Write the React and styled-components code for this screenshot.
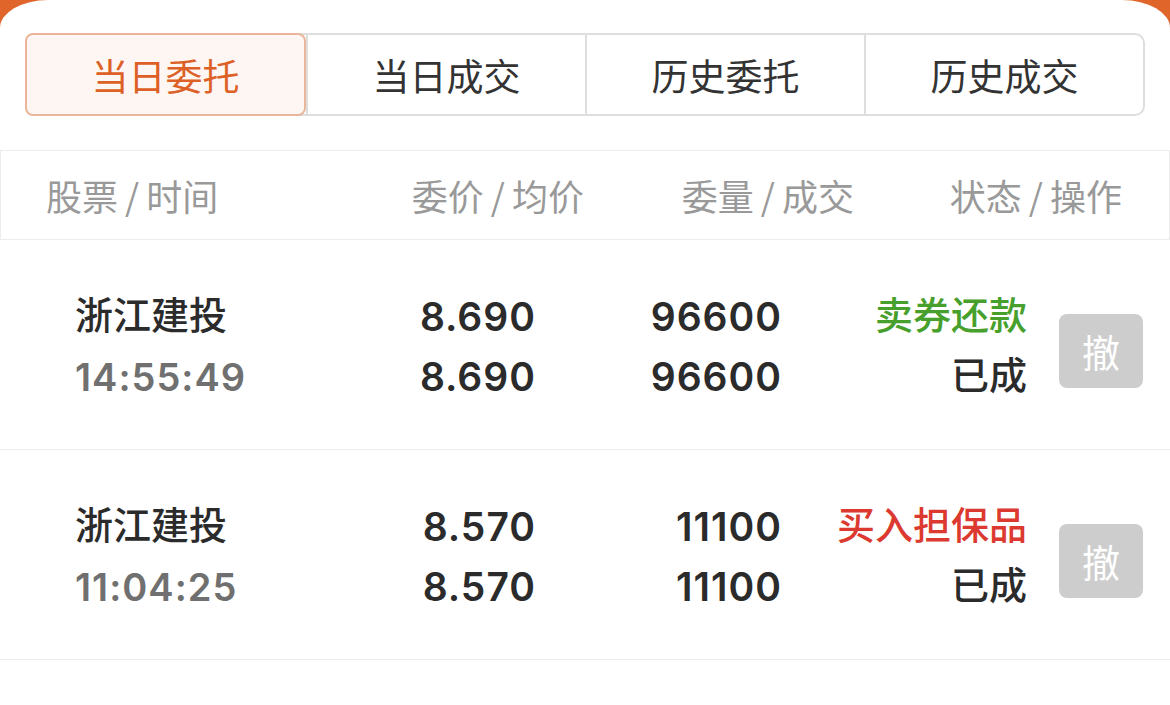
import React from 'react';
import styled, { createGlobalStyle } from 'styled-components';

const GlobalStyle = createGlobalStyle`
  html, body {
    margin: 0;
    padding: 0;
    background: #fff;
  }
  * {
    box-sizing: border-box;
  }
`;

const tabs = ['当日委托', '当日成交', '历史委托', '历史成交'];

const columns = [
  ['股票', '时间'],
  ['委价', '均价'],
  ['委量', '成交'],
  ['状态', '操作'],
];

const orders = [
  {
    name: '浙江建投',
    time: '14:55:49',
    price: '8.690',
    avg: '8.690',
    qty: '96600',
    deal: '96600',
    type: '卖券还款',
    side: 'sell',
    status: '已成',
  },
  {
    name: '浙江建投',
    time: '11:04:25',
    price: '8.570',
    avg: '8.570',
    qty: '11100',
    deal: '11100',
    type: '买入担保品',
    side: 'buy',
    status: '已成',
  },
];

const App = () => {
  return (
    <>
      <GlobalStyle />
      <Page>
        <Card>
          <TabBar>
            {tabs.map((t, i) => (
              <Tab key={t} active={i === 0}>
                {t}
              </Tab>
            ))}
          </TabBar>

          <HeaderRow>
            {columns.map(([a, b], i) => (
              <HeaderCell key={a} right={i > 0}>
                {a}
                <Slash>/</Slash>
                {b}
              </HeaderCell>
            ))}
          </HeaderRow>

          {orders.map((o, i) => (
            <OrderRow key={i}>
              <Cell>
                <Name>{o.name}</Name>
                <Time>{o.time}</Time>
              </Cell>
              <Cell right>
                <Num>{o.price}</Num>
                <Num>{o.avg}</Num>
              </Cell>
              <Cell right>
                <Num>{o.qty}</Num>
                <Num>{o.deal}</Num>
              </Cell>
              <Cell right>
                <TypeText side={o.side}>{o.type}</TypeText>
                <Status>{o.status}</Status>
              </Cell>
              <ActionCell>
                <CancelButton>撤</CancelButton>
              </ActionCell>
            </OrderRow>
          ))}
        </Card>
      </Page>
    </>
  );
};

const Page = styled.div`
  background: #e0652a;
  min-height: 705px;
  font-family: "Noto Sans CJK SC", "Liberation Sans", sans-serif;
`;

const Card = styled.div`
  background: #fff;
  min-height: 705px;
  padding-top: 33px;
  border-radius: 48px 48px 0 0 / 28px 28px 0 0;
`;

const TabBar = styled.div`
  display: grid;
  grid-template-columns: repeat(4, 1fr);
  margin: 0 25px;
  height: 83px;
  border: 2px solid #dedede;
  border-radius: 10px;
`;

const Tab = styled.div`
  display: flex;
  align-items: center;
  justify-content: center;
  font-size: 37px;
  color: ${(p) => (p.active ? '#dd6026' : '#333')};
  background: ${(p) => (p.active ? '#fdf6f2' : 'transparent')};
  border: ${(p) => (p.active ? '2px solid #eab69b' : 'none')};
  border-left: ${(p) => (p.active ? '2px solid #eab69b' : '2px solid #dedede')};
  border-radius: ${(p) => (p.active ? '8px' : '0')};
  margin: ${(p) => (p.active ? '-2px 0 -2px -2px' : '0')};
`;

const HeaderRow = styled.div`
  display: grid;
  grid-template-columns: 355px 183px 270px 1fr;
  align-items: center;
  height: 90px;
  margin-top: 34px;
  padding: 0 47px 0 45px;
  border: 1px solid #ececec;
`;

const HeaderCell = styled.div`
  font-size: 36px;
  color: #999;
  white-space: nowrap;
  text-align: ${(p) => (p.right ? 'right' : 'left')};
`;

const Slash = styled.span`
  margin: 0 7px;
`;

const OrderRow = styled.div`
  display: grid;
  grid-template-columns: 305px 155px 246px 246px 1fr;
  align-items: center;
  height: 210px;
  padding: 0 27px 0 75px;
  border-bottom: 1px solid #ececec;
`;

const Cell = styled.div`
  display: flex;
  flex-direction: column;
  align-items: ${(p) => (p.right ? 'flex-end' : 'flex-start')};
  margin-top: -3px;
`;

const Line = styled.div`
  height: 60px;
  line-height: 60px;
  white-space: nowrap;
`;

const Name = styled(Line)`
  font-size: 38px;
  font-weight: 500;
  color: #2b2b2b;
`;

const Time = styled(Line)`
  font-family: "Inter", "Liberation Sans", sans-serif;
  font-size: 38px;
  font-weight: 600;
  letter-spacing: 1px;
  color: #707070;
  padding-top: 4px;
`;

const Num = styled(Line)`
  font-family: "Inter", "Liberation Sans", sans-serif;
  font-size: 39px;
  font-weight: 600;
  letter-spacing: 1px;
  margin-right: -1px;
  color: #2b2b2b;
  padding-top: 4px;
`;

const TypeText = styled(Line)`
  font-size: 38px;
  font-weight: 500;
  color: ${(p) => (p.side === 'sell' ? '#47a02b' : '#dc3a30')};
`;

const Status = styled(Line)`
  font-size: 38px;
  font-weight: 500;
  color: #2b2b2b;
`;

const ActionCell = styled.div`
  display: flex;
  justify-content: flex-end;
  margin-top: 12px;
`;

const CancelButton = styled.div`
  width: 84px;
  height: 74px;
  border-radius: 8px;
  background: #cdcdcd;
  color: #fff;
  font-size: 38px;
  display: flex;
  align-items: center;
  justify-content: center;
`;

export default App;
